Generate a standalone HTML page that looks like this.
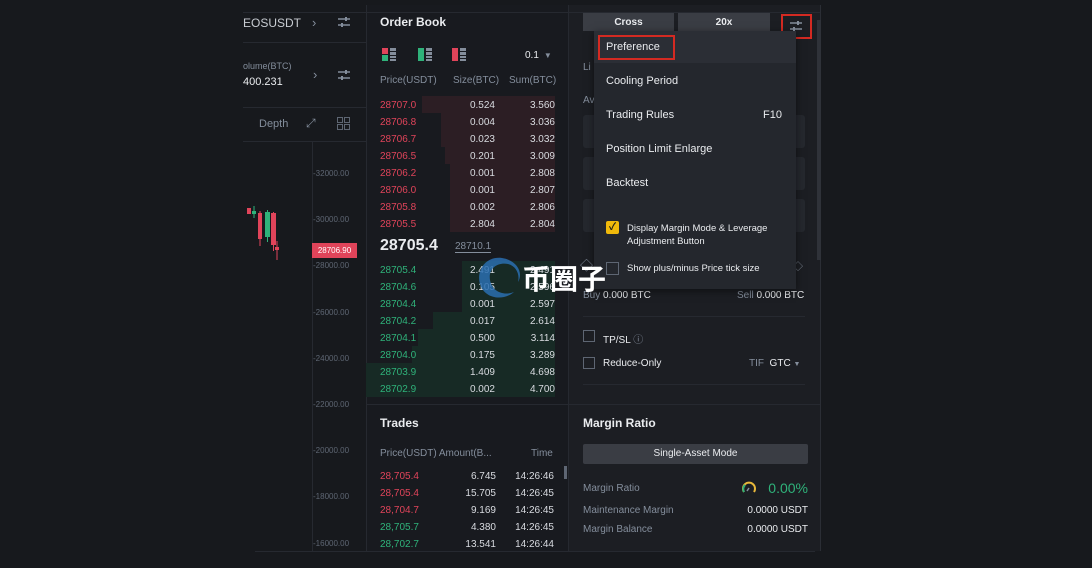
<!DOCTYPE html>
<html><head><meta charset="utf-8"><style>
*{margin:0;padding:0;box-sizing:border-box}
body{width:1092px;height:568px;background:#17191d;font-family:"Liberation Sans","Noto Sans CJK SC",sans-serif;position:relative;overflow:hidden;color:#eaecef}
.a{position:absolute;white-space:nowrap}
.r{color:#e0445a}.g{color:#2fb27a}.m{color:#848e9c}
.ln{position:absolute;background:#262930}
.ob div{position:absolute;font-size:10px;height:12px;line-height:12px}
</style></head><body>
<div class="a" style="left:243px;top:5px;width:123px;height:546px;background:#17191d"></div>
<div class="a" style="left:366px;top:5px;width:202px;height:546px;background:#181a1f"></div>
<div class="a" style="left:568px;top:5px;width:252px;height:546px;background:#1c1e23"></div>
<div class="ln" style="left:243px;top:12px;width:578px;height:1px"></div>
<div class="ln" style="left:243px;top:42px;width:123px;height:1px"></div>
<div class="ln" style="left:243px;top:107px;width:123px;height:1px"></div>
<div class="ln" style="left:243px;top:141px;width:123px;height:1px"></div>
<div class="ln" style="left:366px;top:5px;width:1px;height:546px"></div>
<div class="ln" style="left:568px;top:5px;width:1px;height:546px"></div>
<div class="ln" style="left:366px;top:404px;width:455px;height:1px"></div>
<div class="ln" style="left:255px;top:551px;width:560px;height:1px"></div>
<div class="ln" style="left:820px;top:5px;width:1px;height:546px;background:#2b2e35"></div>
<div class="a" style="left:817px;top:20px;width:4px;height:240px;background:#2f3239"></div>

<!-- left column -->
<div class="a" style="left:243px;top:16px;font-size:12px;color:#c8ccd2">EOSUSDT</div>
<div class="a m" style="left:312px;top:15px;font-size:13px">›</div>
<svg class="a" style="left:337px;top:15px" width="14" height="14"><g stroke="#848e9c" stroke-width="1.5"><line x1="1" y1="4" x2="13" y2="4"/><line x1="1" y1="10" x2="13" y2="10"/></g><rect x="8" y="2" width="2" height="4" fill="#848e9c"/><rect x="4" y="8" width="2" height="4" fill="#848e9c"/></svg>
<div class="a m" style="left:243px;top:61px;font-size:9px">olume(BTC)</div>
<div class="a" style="left:243px;top:76px;font-size:11px;color:#eaecef">400.231</div>
<div class="a m" style="left:313px;top:67px;font-size:13px">›</div>
<svg class="a" style="left:337px;top:68px" width="14" height="14"><g stroke="#848e9c" stroke-width="1.5"><line x1="1" y1="4" x2="13" y2="4"/><line x1="1" y1="10" x2="13" y2="10"/></g><rect x="8" y="2" width="2" height="4" fill="#848e9c"/><rect x="4" y="8" width="2" height="4" fill="#848e9c"/></svg>
<div class="a m" style="left:259px;top:118px;font-size:11px">Depth</div>
<div class="a m" style="left:306px;top:116px;font-size:12px">⤢</div>
<svg class="a" style="left:337px;top:117px" width="13" height="13"><g fill="none" stroke="#5e6673"><rect x="0.5" y="0.5" width="5" height="5"/><rect x="7.5" y="0.5" width="5" height="5"/><rect x="0.5" y="7.5" width="5" height="5"/><rect x="7.5" y="7.5" width="5" height="5"/></g></svg>
<div class="ln" style="left:312px;top:141px;width:1px;height:410px"></div>
<div class="a" style="left:313px;top:151px;font-size:8px;color:#5e6673;line-height:46.2px">
-32000.00<br>-30000.00<br>-28000.00<br>-26000.00<br>-24000.00<br>-22000.00<br>-20000.00<br>-18000.00<br>-16000.00</div>
<div class="a" style="left:312px;top:243px;width:45px;height:15px;background:#e0445a;font-size:8px;color:#fff;text-align:center;line-height:15px">28706.90</div>
<svg class="a" style="left:245px;top:200px" width="40" height="65">
<rect x="2" y="8" width="4" height="6" fill="#e0445a"/><line x1="9" y1="6" x2="9" y2="18" stroke="#2fb27a"/><rect x="7" y="11" width="4" height="3" fill="#2fb27a"/>
<rect x="13" y="13" width="4" height="26" fill="#e0445a"/><line x1="15" y1="11" x2="15" y2="46" stroke="#e0445a"/>
<rect x="20" y="12" width="5" height="25" fill="#2fb27a"/><line x1="22.5" y1="10" x2="22.5" y2="42" stroke="#2fb27a"/>
<rect x="26" y="13" width="5" height="32" fill="#e0445a"/><line x1="28.5" y1="12" x2="28.5" y2="51" stroke="#e0445a"/>
<rect x="30" y="47" width="4" height="3" fill="#e0445a"/><line x1="32" y1="41" x2="32" y2="60" stroke="#e0445a"/>
</svg>

<!-- order book -->
<div class="a" style="left:380px;top:15px;font-size:12px;font-weight:bold">Order Book</div>
<svg class="a" style="left:382px;top:47px" width="90" height="16">
<rect x="0" y="1" width="6" height="6" fill="#e0445a"/><rect x="0" y="8" width="6" height="6" fill="#2fb27a"/><rect x="8" y="1" width="6" height="3" fill="#848e9c"/><rect x="8" y="5" width="6" height="3" fill="#848e9c"/><rect x="8" y="9" width="6" height="2" fill="#848e9c"/><rect x="8" y="12" width="6" height="2" fill="#848e9c"/>
<rect x="36" y="1" width="6" height="13" fill="#2fb27a"/><rect x="44" y="1" width="6" height="3" fill="#848e9c"/><rect x="44" y="5" width="6" height="3" fill="#848e9c"/><rect x="44" y="9" width="6" height="2" fill="#848e9c"/><rect x="44" y="12" width="6" height="2" fill="#848e9c"/>
<rect x="70" y="1" width="6" height="13" fill="#e0445a"/><rect x="78" y="1" width="6" height="3" fill="#848e9c"/><rect x="78" y="5" width="6" height="3" fill="#848e9c"/><rect x="78" y="9" width="6" height="2" fill="#848e9c"/><rect x="78" y="12" width="6" height="2" fill="#848e9c"/>
</svg>
<div class="a" style="left:525px;top:50px;font-size:10px">0.1 <span class="m" style="font-size:8px">&nbsp;▼</span></div>
<div class="a m" style="left:380px;top:75px;font-size:10px">Price(USDT)</div>
<div class="a m" style="left:453px;top:75px;font-size:10px">Size(BTC)</div>
<div class="a m" style="left:509px;top:75px;font-size:10px">Sum(BTC)</div>
<div class="a" style="left:422px;top:96px;width:133px;height:17px;background:#2c1e24"></div>
<div class="a" style="left:441px;top:113px;width:114px;height:34px;background:#2c1e24"></div>
<div class="a" style="left:445px;top:147px;width:110px;height:17px;background:#2c1e24"></div>
<div class="a" style="left:450px;top:164px;width:105px;height:68px;background:#2c1e24"></div>
<div class="a" style="left:462px;top:261px;width:93px;height:51px;background:#172a25"></div>
<div class="a" style="left:433px;top:312px;width:122px;height:17px;background:#172a25"></div>
<div class="a" style="left:418px;top:329px;width:137px;height:17px;background:#172a25"></div>
<div class="a" style="left:412px;top:346px;width:143px;height:17px;background:#172a25"></div>
<div class="a" style="left:366px;top:363px;width:189px;height:34px;background:#172a25"></div>
<div class="ob">
<div class="r" style="left:380px;top:97px;line-height:17px;height:auto">28707.0<br>28706.8<br>28706.7<br>28706.5<br>28706.2<br>28706.0<br>28705.8<br>28705.5</div>
<div style="left:440px;width:55px;text-align:right;top:97px;line-height:17px;height:auto;color:#d8dbe0">0.524<br>0.004<br>0.023<br>0.201<br>0.001<br>0.001<br>0.002<br>2.804</div>
<div style="left:500px;width:55px;text-align:right;top:97px;line-height:17px;height:auto;color:#d8dbe0">3.560<br>3.036<br>3.032<br>3.009<br>2.808<br>2.807<br>2.806<br>2.804</div>
<div class="g" style="left:380px;top:262px;line-height:17px;height:auto">28705.4<br>28704.6<br>28704.4<br>28704.2<br>28704.1<br>28704.0<br>28703.9<br>28702.9</div>
<div style="left:440px;width:55px;text-align:right;top:262px;line-height:17px;height:auto;color:#d8dbe0">2.491<br>0.105<br>0.001<br>0.017<br>0.500<br>0.175<br>1.409<br>0.002</div>
<div style="left:500px;width:55px;text-align:right;top:262px;line-height:17px;height:auto;color:#d8dbe0">2.491<br>2.596<br>2.597<br>2.614<br>3.114<br>3.289<br>4.698<br>4.700</div>
</div>
<div class="a" style="left:380px;top:237px;font-size:16px;font-weight:bold">28705.4</div>
<div class="a m" style="left:455px;top:241px;font-size:10px;border-bottom:1px solid #848e9c">28710.1</div>

<!-- trades -->
<div class="a" style="left:380px;top:416px;font-size:12px;font-weight:bold">Trades</div>
<div class="a m" style="left:380px;top:448px;font-size:10px">Price(USDT) Amount(B...</div>
<div class="a m" style="left:531px;top:448px;font-size:10px">Time</div>
<div class="a" style="left:564px;top:466px;width:3px;height:13px;background:#5e6673"></div>
<div class="a" style="left:380px;top:468px;font-size:10px;line-height:17px"><span class="r">28,705.4<br>28,705.4<br>28,704.7</span><br><span class="g">28,705.7<br>28,702.7</span></div>
<div class="a" style="left:440px;width:56px;text-align:right;top:468px;font-size:10px;line-height:17px;color:#d8dbe0">6.745<br>15.705<br>9.169<br>4.380<br>13.541</div>
<div class="a" style="left:500px;width:54px;text-align:right;top:468px;font-size:10px;line-height:17px;color:#d8dbe0">14:26:46<br>14:26:45<br>14:26:45<br>14:26:45<br>14:26:44</div>

<!-- right form -->
<div class="a" style="left:583px;top:13px;width:91px;height:18px;background:#3a3d44;font-size:10px;font-weight:bold;text-align:center;line-height:20px">Cross</div>
<div class="a" style="left:678px;top:13px;width:92px;height:18px;background:#3a3d44;font-size:10px;font-weight:bold;text-align:center;line-height:20px">20x</div>
<div class="a" style="left:781px;top:14px;width:31px;height:25px;border:2px solid #d42a22"></div>
<svg class="a" style="left:789px;top:19px" width="14" height="14"><g stroke="#848e9c" stroke-width="1.5"><line x1="1" y1="4" x2="13" y2="4"/><line x1="1" y1="10" x2="13" y2="10"/></g><rect x="8" y="2" width="2" height="4" fill="#848e9c"/><rect x="4" y="8" width="2" height="4" fill="#848e9c"/></svg>
<div class="a m" style="left:583px;top:62px;font-size:10px">Li</div>
<div class="a m" style="left:583px;top:95px;font-size:10px">Av</div>
<div class="a" style="left:583px;top:115px;width:222px;height:33px;background:#25282e;border-radius:3px"></div>
<div class="a" style="left:583px;top:157px;width:222px;height:33px;background:#25282e;border-radius:3px"></div>
<div class="a" style="left:583px;top:199px;width:222px;height:33px;background:#25282e;border-radius:3px"></div>
<div class="a m" style="left:580px;top:255px;font-size:13px">◇</div>
<div class="a m" style="left:793px;top:258px;font-size:10px">◇</div>
<div class="a m" style="left:583px;top:290px;font-size:10px">Buy <span style="color:#eaecef">0.000 BTC</span></div>
<div class="a m" style="left:737px;top:290px;font-size:10px">Sell <span style="color:#eaecef">0.000 BTC</span></div>
<div class="ln" style="left:583px;top:316px;width:222px;height:1px"></div>
<div class="a" style="left:583px;top:330px;width:12px;height:12px;border:1px solid #5e6673"></div>
<div class="a" style="left:603px;top:331px;font-size:10px">TP/SL <span class="m">ⓘ</span></div>
<div class="a" style="left:583px;top:357px;width:12px;height:12px;border:1px solid #5e6673"></div>
<div class="a" style="left:603px;top:358px;font-size:10px">Reduce-Only</div>
<div class="a" style="left:749px;top:358px;font-size:10px"><span class="m">TIF</span>&nbsp; GTC <span class="m" style="font-size:7px">▼</span></div>
<div class="ln" style="left:583px;top:384px;width:222px;height:1px"></div>

<!-- menu -->
<div class="a" style="left:594px;top:31px;width:202px;height:258px;background:#24272d;box-shadow:0 2px 8px rgba(0,0,0,.5)"></div>
<div class="a" style="left:594px;top:31px;width:202px;height:32px;background:#2b2e35"></div>
<div class="a" style="left:598px;top:35px;width:77px;height:25px;border:2px solid #d42a22"></div>
<div class="a" style="left:606px;top:41px;font-size:11px">Preference</div>
<div class="a" style="left:606px;top:75px;font-size:11px">Cooling Period</div>
<div class="a" style="left:606px;top:109px;font-size:11px">Trading Rules</div>
<div class="a" style="left:763px;top:109px;font-size:11px">F10</div>
<div class="a" style="left:606px;top:143px;font-size:11px">Position Limit Enlarge</div>
<div class="a" style="left:606px;top:177px;font-size:11px">Backtest</div>
<div class="a" style="left:606px;top:221px;width:13px;height:13px;background:#f0b90b;border-radius:2px;color:#1a1a1a;font-size:10px;line-height:13px;text-align:center;font-weight:bold">✓</div>
<div class="a" style="left:627px;top:222px;font-size:9.5px;line-height:13px">Display Margin Mode &amp; Leverage<br>Adjustment Button</div>
<div class="a" style="left:606px;top:262px;width:13px;height:13px;border:1px solid #5e6673"></div>
<div class="a" style="left:627px;top:263px;font-size:9.5px">Show plus/minus Price tick size</div>

<!-- margin ratio -->
<div class="a" style="left:583px;top:416px;font-size:12px;font-weight:bold">Margin Ratio</div>
<div class="a" style="left:583px;top:444px;width:225px;height:20px;background:#3a3d44;border-radius:2px;font-size:10px;text-align:center;line-height:20px">Single-Asset Mode</div>
<div class="a m" style="left:583px;top:483px;font-size:10px">Margin Ratio</div>
<svg class="a" style="left:741px;top:480px" width="16" height="14"><path d="M3 12 A6 6 0 1 1 13 12" fill="none" stroke="#e8b83a" stroke-width="2"/><path d="M3 12 A6 6 0 0 1 4 5" fill="none" stroke="#2fb27a" stroke-width="2"/><line x1="8" y1="8" x2="6" y2="11" stroke="#848e9c" stroke-width="1.5"/></svg>
<div class="a g" style="left:708px;width:100px;text-align:right;top:480px;font-size:14px">0.00%</div>
<div class="a m" style="left:583px;top:505px;font-size:10px">Maintenance Margin</div>
<div class="a" style="left:708px;width:100px;text-align:right;top:505px;font-size:10px">0.0000 USDT</div>
<div class="a m" style="left:583px;top:524px;font-size:10px">Margin Balance</div>
<div class="a" style="left:708px;width:100px;text-align:right;top:524px;font-size:10px">0.0000 USDT</div>

<!-- watermark -->
<svg class="a" style="left:472px;top:254px" width="56" height="50"><path d="M30 4 C14 2 4 16 8 30 C12 44 30 48 42 38 C32 42 20 38 18 26 C16 14 26 8 36 10 C44 12 48 20 46 28 C52 18 44 6 30 4 Z" fill="#2a6fb0" opacity=".85"/></svg>
<div class="a" style="left:522px;top:261px;font-size:28px;font-weight:bold;color:#fff;font-family:'Noto Sans CJK SC',sans-serif;line-height:34px">币圈子</div>
</body></html>
